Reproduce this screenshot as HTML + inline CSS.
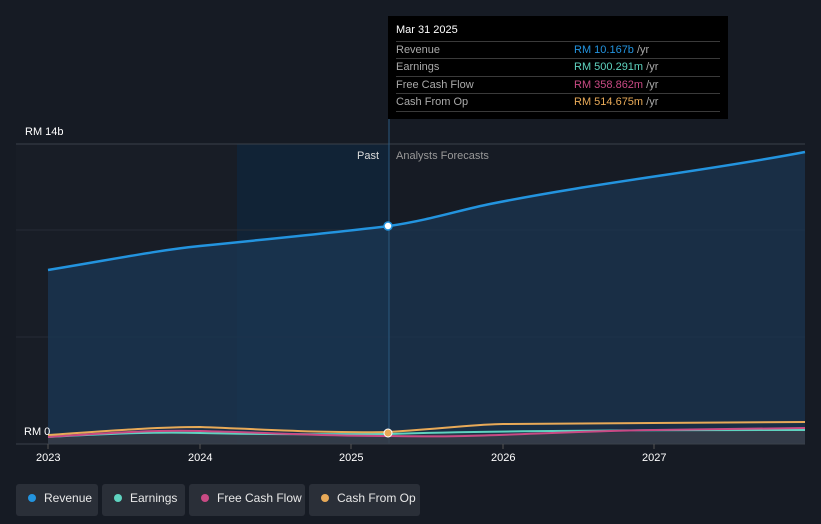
<!DOCTYPE html>
<html><head><meta charset="utf-8"><style>
body{margin:0;width:821px;height:524px;background:#161b24;font-family:"Liberation Sans",sans-serif;overflow:hidden;position:relative}
.t{position:absolute;font-size:11px;color:#fff}
.tip{position:absolute;left:388px;top:16px;width:340px;height:103px;background:#000}
.tip .r{position:absolute;left:8px;width:324px;border-top:1px solid #3a3a3a;height:17px;font-size:11px;color:#aaa;line-height:17px}
.tip .r span{position:absolute;left:178px}
.leg{position:absolute;top:484px;height:32px;background:#2a2f38;border-radius:3px;color:#e8e8e8;font-size:12px;line-height:28px}
.leg i{position:absolute;left:12px;top:10px;width:8px;height:8px;border-radius:50%}
</style></head><body>
<svg width="821" height="524" style="position:absolute;left:0;top:0">
<rect x="16" y="144" width="373" height="300" fill="#181d26"/>
<rect x="237" y="144" width="152" height="300" fill="#112336"/>
<line x1="16" y1="144" x2="805" y2="144" stroke="#3a404a"/>
<line x1="16" y1="230" x2="805" y2="230" stroke="#262c36"/>
<line x1="16" y1="337" x2="805" y2="337" stroke="#262c36"/>
<path d="M48,270 C120,258 160,250 200,246 C280,238 340,232 389,226 L389,444 L48,444Z" fill="#1a3652" opacity="0.8"/>
<path d="M389,226 C430,220 460,210 490,204 C600,182 700,172 805,152 L805,444 L389,444Z" fill="#1b3550" opacity="0.75"/>
<path d="M48,270 C120,258 160,250 200,246 C280,238 340,232 389,226 C430,220 460,210 490,204 C600,182 700,172 805,152" fill="none" stroke="#2394df" stroke-width="2.5"/>
<line x1="389" y1="16" x2="389" y2="444" stroke="#2a5a80"/>
<path d="M48,438 L200,432 L351,436 L389,435 L805,430 L805,444 L48,444Z" fill="#3a3f48" opacity="0.8"/>
<path d="M48,437 C120,433 160,432 200,433 C280,435 320,434 389,434 C480,431 600,430 805,430" fill="none" stroke="#5fd3c0" stroke-width="2"/>
<path d="M48,437 C120,432 160,430 200,431 C280,433 320,436 389,436 C480,438 540,432 654,430 L805,428" fill="none" stroke="#c94a84" stroke-width="2"/>
<path d="M48,435 C120,430 160,427 200,427 C280,430 320,433 389,432 C450,428 480,424 503,424 L805,422" fill="none" stroke="#e8aa58" stroke-width="2"/>
<circle cx="388" cy="226" r="4" fill="#fff" stroke="#2394df" stroke-width="1.5"/>
<circle cx="388" cy="433" r="4" fill="#e8aa58" stroke="#fff" stroke-width="1"/>
<line x1="16" y1="444" x2="805" y2="444" stroke="#3a404a"/>
<g stroke="#555"><line x1="48" y1="444" x2="48" y2="449"/><line x1="200" y1="444" x2="200" y2="449"/><line x1="351" y1="444" x2="351" y2="449"/><line x1="503" y1="444" x2="503" y2="449"/><line x1="654" y1="444" x2="654" y2="449"/></g>
</svg>
<div class="t" style="left:25px;top:126px">RM 14b</div>
<div class="t" style="left:24px;top:426px">RM 0</div>
<div class="t" style="left:357px;top:150px;color:#ddd">Past</div>
<div class="t" style="left:396px;top:150px;color:#999">Analysts Forecasts</div>
<div class="t" style="left:36px;top:452px">2023</div>
<div class="t" style="left:188px;top:452px">2024</div>
<div class="t" style="left:339px;top:452px">2025</div>
<div class="t" style="left:491px;top:452px">2026</div>
<div class="t" style="left:642px;top:452px">2027</div>
<div class="tip">
<div style="position:absolute;left:8px;top:8px;color:#fff;font-size:11px">Mar 31 2025</div>
<div class="r" style="top:25px">Revenue<span><b style="font-weight:normal;color:#2394df">RM 10.167b</b> /yr</span></div>
<div class="r" style="top:42px">Earnings<span><b style="font-weight:normal;color:#5fd3c0">RM 500.291m</b> /yr</span></div>
<div class="r" style="top:60px">Free Cash Flow<span><b style="font-weight:normal;color:#c94a84">RM 358.862m</b> /yr</span></div>
<div class="r" style="top:77px;border-bottom:1px solid #3a3a3a">Cash From Op<span><b style="font-weight:normal;color:#e8aa58">RM 514.675m</b> /yr</span></div>
</div>
<div class="leg" style="left:16px;width:82px"><i style="background:#2394df"></i><span style="position:absolute;left:28px">Revenue</span></div>
<div class="leg" style="left:102px;width:83px"><i style="background:#5fd3c0"></i><span style="position:absolute;left:28px">Earnings</span></div>
<div class="leg" style="left:189px;width:116px"><i style="background:#c94a84"></i><span style="position:absolute;left:28px">Free Cash Flow</span></div>
<div class="leg" style="left:309px;width:111px"><i style="background:#e8aa58"></i><span style="position:absolute;left:28px">Cash From Op</span></div>
</body></html>
